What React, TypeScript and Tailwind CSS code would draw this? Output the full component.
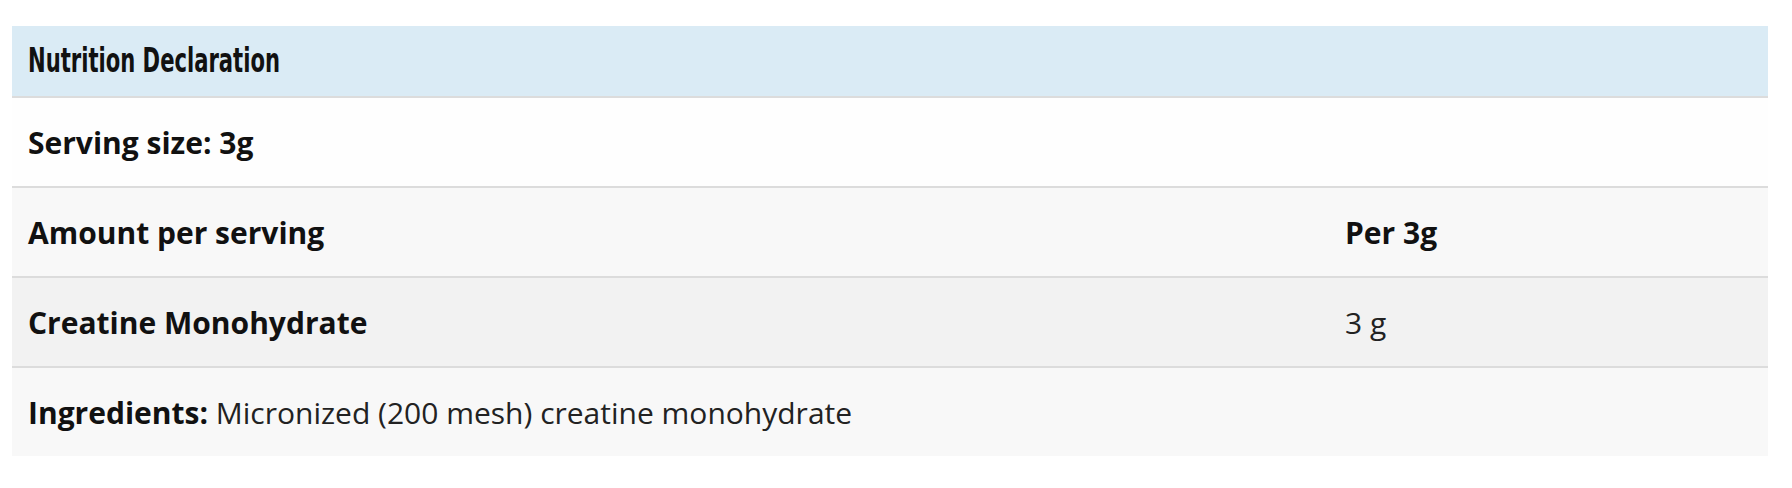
export default function App() {
  const body = { fontFamily: '"Open Sans", "Liberation Sans", sans-serif' };
  return (
    <div className="min-h-screen bg-white pl-3 pr-6 pt-[26px]" style={body}>
      <div className="w-full text-[30px] text-[#111]">
        <div className="flex h-[72px] items-center border-b-2 border-[#dcdcdc] bg-[#daebf5] px-4 pb-[2px]">
          <span
            className="inline-block origin-left scale-x-[0.69] text-[34px] font-bold text-[#111] [font-stretch:condensed]"
            style={{ fontFamily: '"DejaVu Sans Condensed", "DejaVu Sans", sans-serif' }}
          >
            Nutrition Declaration
          </span>
        </div>
        <div className="flex h-[90px] items-center border-b-2 border-[#dcdcdc] bg-[#fefefe] px-4">
          <span className="font-bold">Serving size: 3g</span>
        </div>
        <div className="flex h-[90px] items-center border-b-2 border-[#dcdcdc] bg-[#f8f8f8]">
          <div className="w-3/4 px-4 font-bold">Amount per serving</div>
          <div className="w-1/4 px-4 font-bold">Per 3g</div>
        </div>
        <div className="flex h-[90px] items-center border-b-2 border-[#dcdcdc] bg-[#f2f2f2]">
          <div className="w-3/4 px-4 font-bold">Creatine Monohydrate</div>
          <div className="w-1/4 px-4 text-[#222]">3 g</div>
        </div>
        <div className="flex h-[88px] items-center bg-[#f8f8f8] px-4 text-[#222]">
          <span>
            <b className="font-bold text-[#111]">Ingredients:</b> Micronized (200 mesh) creatine monohydrate
          </span>
        </div>
      </div>
    </div>
  );
}
